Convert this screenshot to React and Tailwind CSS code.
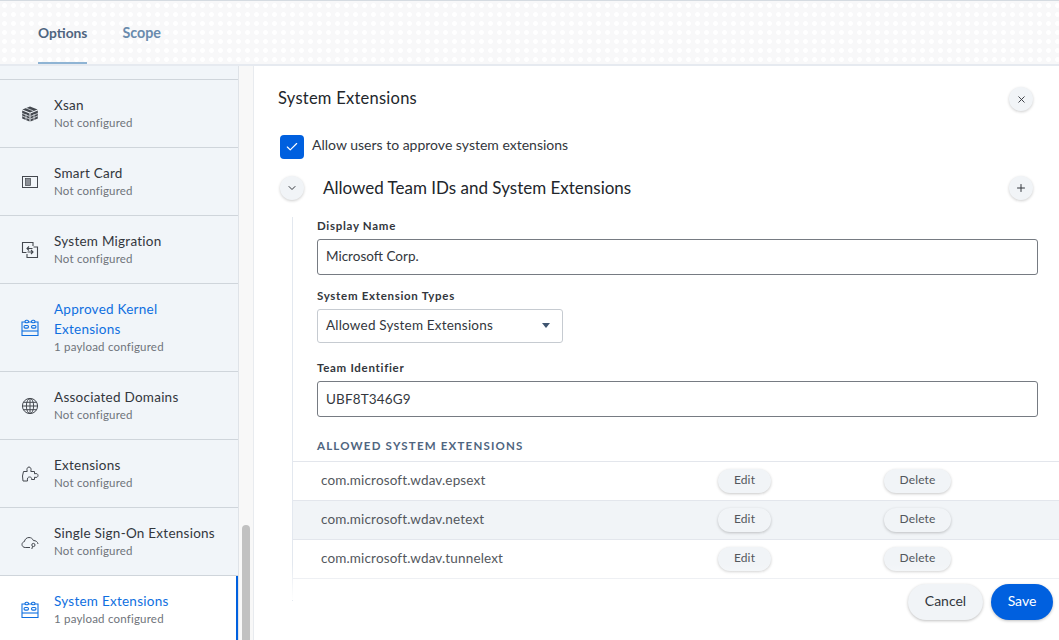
import React from 'react'
import { Check, ChevronDown, X, Plus } from 'lucide-react'

function XsanIcon() {
  return (
    <svg width="18" height="18" viewBox="0 0 18 18" fill="#44484f">
      <path d="M9 1.5 16.6 4.6 9 7.6 1.4 4.6Z" />
      <path d="M1.2 5.6 8.5 8.6V16.6L1.2 13.6Z" />
      <path d="M16.8 5.6 9.5 8.6V16.6L16.8 13.6Z" />
      <path d="M1.2 8.4 8.5 11.4M1.2 11 8.5 14M16.8 8.4 9.5 11.4M16.8 11 9.5 14M5 3 12.5 6M5 9 5 15M13 9 13 15" stroke="#f1f5f9" strokeWidth="0.7" fill="none" />
    </svg>
  )
}

function CardIcon() {
  return (
    <svg width="18" height="18" viewBox="0 0 18 18" fill="none" stroke="#44484f">
      <rect x="1.5" y="3.5" width="15" height="11" strokeWidth="1" />
      <rect x="4.5" y="5.5" width="5" height="7" fill="#8b8f96" strokeWidth="0.7" />
    </svg>
  )
}

function MigrationIcon() {
  return (
    <svg width="18" height="18" viewBox="0 0 18 18" fill="none" stroke="#44484f" strokeWidth="1.1">
      <path d="M5.5 11.5H1.5V1.5H12V5" />
      <path d="M12.5 6H16.5V16.5H6V13" />
      <path d="M11.5 7.5H6M8 5.5 6 7.5 8 9.5" />
      <path d="M6.5 11H12M10 9 12 11 10 13" />
    </svg>
  )
}

function KernelIcon() {
  return (
    <svg width="18" height="18" viewBox="0 0 18 18" fill="none" stroke="#0f6fe0" strokeWidth="1.1">
      <path d="M1 3H17V16.5H1Z" />
      <path d="M1 12H17" />
      <rect x="3" y="6.5" width="4.5" height="2.6" rx="1.3" />
      <rect x="10.5" y="6.5" width="4.5" height="2.6" rx="1.3" />
      <rect x="4" y="1.2" width="3.5" height="2.6" rx="1.3" fill="#f1f5f9" />
      <rect x="10.5" y="1.2" width="3.5" height="2.6" rx="1.3" fill="#f1f5f9" />
    </svg>
  )
}

function GlobeIcon() {
  return (
    <svg width="18" height="18" viewBox="0 0 18 18" fill="none" stroke="#44484f" strokeWidth="1">
      <circle cx="9" cy="9" r="7.6" />
      <ellipse cx="9" cy="9" rx="3.6" ry="7.6" />
      <path d="M9 1.4V16.6M1.4 9H16.6M2.5 5.3H15.5M2.5 12.7H15.5" />
    </svg>
  )
}

function PuzzleIcon() {
  return (
    <svg width="18" height="18" viewBox="0 0 18 18" fill="none" stroke="#44484f" strokeWidth="1">
      <path d="M2 16 1.5 11 2.5 6.5H6.2C5.4 3.5 6.5 2 8 2 9.5 2 10.6 3.5 9.8 6.5H13.5V8.8C16 8 17 9.2 17 10.5 17 11.8 16 13 13.5 12.2V14.5H10.5C11 12.8 10 12 8.5 12 7 12 6 13 6.5 16Z" />
    </svg>
  )
}

function CloudIcon() {
  return (
    <svg width="18" height="18" viewBox="0 0 18 18" fill="none" stroke="#44484f" strokeWidth="1">
      <path d="M9 14.5H4.2C2.4 14.5 1 13.2 1 11.5 1 10 2 8.9 3.4 8.6 3.8 6.2 5.7 4.5 8 4.5 10 4.5 11.7 5.7 12.4 7.5 14.8 7.5 16.8 8.9 17 11" />
      <circle cx="12.4" cy="12" r="1.6" />
      <path d="M11.6 13.4 10.8 16" />
    </svg>
  )
}

const items = [
  { name: 'Xsan', sub: 'Not configured', icon: <XsanIcon /> },
  { name: 'Smart Card', sub: 'Not configured', icon: <CardIcon /> },
  { name: 'System Migration', sub: 'Not configured', icon: <MigrationIcon /> },
  { name: 'Approved Kernel Extensions', sub: '1 payload configured', icon: <KernelIcon />, blue: true, tall: true },
  { name: 'Associated Domains', sub: 'Not configured', icon: <GlobeIcon /> },
  { name: 'Extensions', sub: 'Not configured', icon: <PuzzleIcon /> },
  { name: 'Single Sign-On Extensions', sub: 'Not configured', icon: <CloudIcon /> },
  { name: 'System Extensions', sub: '1 payload configured', icon: <KernelIcon />, blue: true, active: true },
]

const rows = [
  { name: 'com.microsoft.wdav.epsext' },
  { name: 'com.microsoft.wdav.netext', shaded: true },
  { name: 'com.microsoft.wdav.tunnelext' },
]

function SideItem({ item }) {
  return (
    <div
      className={`flex items-center shrink-0 pl-[21px] border-b border-[#cfd5db] ${item.tall ? 'h-[88px]' : 'h-[68px]'} ${item.active ? 'bg-white border-r-2 border-r-[#0060df]' : ''}`}
    >
      <div className="w-[33px] shrink-0 flex">{item.icon}</div>
      <div className="min-w-0 w-[170px] pb-px">
        <div className={`text-[13.5px] leading-[20px] tracking-[0.25px] ${item.tall ? 'w-[125px]' : ''} ${item.blue ? 'text-[#0f6fe0]' : 'text-[#33373d]'}`}>{item.name}</div>
        <div className="text-[11.5px] leading-[16px] tracking-[0.2px] text-[#6f747b]">{item.sub}</div>
      </div>
    </div>
  )
}

function RoundButton({ children }) {
  return (
    <button className="w-6 h-6 rounded-full bg-[#f1f4f7] shadow-[0_1px_3px_rgba(0,0,0,0.2)] flex items-center justify-center text-[#33373d]">
      {children}
    </button>
  )
}

function Pill({ children, className }) {
  return (
    <button className={`h-6 pb-[2px] rounded-full bg-[#f1f4f7] shadow-[0_1px_3px_rgba(0,0,0,0.22)] text-[12px] text-[#53575d] ${className}`}>
      {children}
    </button>
  )
}

export default function App() {
  return (
    <div className="w-[1059px] h-[640px] overflow-hidden flex flex-col bg-white font-['Lato','Liberation_Sans',sans-serif]">
      <header className="h-[66px] shrink-0 border-t border-[#d5dbe1] border-b-2 border-b-[#e6eaf0] bg-[#f8f8f9] bg-[radial-gradient(#ffffff_2px,transparent_3px)] bg-[length:9px_9px] flex pl-[38px] gap-[35px] z-10">
        <div className="h-full flex items-center pt-[3px] border-b-2 border-[#8fb4d4] mb-[-2px] text-[13.8px] font-bold text-[#4f6580]">Options</div>
        <div className="h-full flex items-center text-[14.3px] font-bold text-[#6a8bad]">Scope</div>
      </header>

      <div className="flex flex-1 min-h-0">
        <aside className="w-[254px] shrink-0 flex border-r border-[#e8ebef]">
          <div className="w-[239px] shrink-0 bg-[#f1f5f9] border-r border-[#dfe3e8] flex flex-col overflow-hidden">
            <div className="h-[14px] shrink-0 border-b border-[#cfd5db]" />
            {items.map((item) => (
              <SideItem key={item.name} item={item} />
            ))}
          </div>
          <div className="flex-1 bg-[#f8f8f8] flex flex-col justify-end items-center">
            <div className="w-[8px] h-[115px] rounded-t-full bg-[#c1c1c1]" />
          </div>
        </aside>

        <main className="flex-1 min-w-0 pl-[24px] relative">
          <div className="flex items-center justify-between h-[66px] pr-[26px]">
            <h1 className="text-[16.5px] tracking-[0.25px] pb-[2px] text-[#22262b]">System Extensions</h1>
            <RoundButton><X size={11} strokeWidth={2} /></RoundButton>
          </div>

          <div className="flex items-start h-[24px] mt-px pl-[2px]">
            <span className="w-6 h-6 mt-[2px] rounded bg-[#0060df] flex items-center justify-center">
              <Check size={14} color="white" strokeWidth={2} />
            </span>
            <span className="ml-2 text-[14px] leading-[24px] text-[#33373d]">Allow users to approve system extensions</span>
          </div>

          <div className="flex items-center justify-between h-[24px] mt-[19px] pl-[2px] pr-[26px]">
            <div className="flex items-center">
              <RoundButton><ChevronDown size={12} strokeWidth={2} /></RoundButton>
              <span className="ml-[19px] pb-px text-[17px] text-[#22262b]">Allowed Team IDs and System Extensions</span>
            </div>
            <RoundButton><Plus size={12} strokeWidth={2} /></RoundButton>
          </div>

          <section className="mt-[17px] ml-[14px] pb-[22px] border-l border-[#e3e8ef]">
            <div className="pl-[24px] pr-[21px]">
              <label className="block text-[11.5px] leading-[16px] font-bold tracking-[0.7px] text-[#33373d] pt-[1px]">Display Name</label>
              <div className="mt-[5px] h-[36px] pb-px border border-[#767b82] rounded-[3px] flex items-center pl-2 text-[13.5px] text-[#33373d]">Microsoft Corp.</div>

              <label className="block mt-[13px] text-[11.5px] leading-[16px] font-bold tracking-[0.7px] text-[#33373d]">System Extension Types</label>
              <div className="mt-[5px] w-[246px] h-[34px] border border-[#c6cbd1] rounded-[3px] flex items-center justify-between pl-2 pr-3 pb-px text-[13.5px] tracking-[0.2px] text-[#33373d]">
                Allowed System Extensions
                <span className="w-0 h-0 border-x-[4px] border-x-transparent border-t-[5px] border-t-[#3f5570]" />
              </div>

              <label className="block mt-[17px] text-[11.5px] leading-[16px] font-bold tracking-[0.7px] text-[#33373d]">Team Identifier</label>
              <div className="mt-[5px] h-[36px] border border-[#767b82] rounded-[3px] flex items-center pl-2 text-[13.5px] tracking-[0.15px] text-[#33373d]">UBF8T346G9</div>

              <div className="mt-[21px] text-[11.5px] leading-[16px] font-bold tracking-[1.2px] text-[#4f6580]">ALLOWED SYSTEM EXTENSIONS</div>
            </div>

            <div className="mt-[7px] border-t border-[#e3e6ec]">
              {rows.map((row) => (
                <div key={row.name} className={`h-[39px] flex items-center border-b border-[#e3e6ec] pl-[28px] text-[13.5px] tracking-[0.15px] text-[#53575d] ${row.shaded ? 'bg-[#f1f4f7]' : ''}`}>
                  <span className="w-[396px] shrink-0 pb-[2px]">{row.name}</span>
                  <Pill className="ml-px w-[53px]">Edit</Pill>
                  <Pill className="ml-[113px] w-[67px]">Delete</Pill>
                </div>
              ))}
            </div>
          </section>

          {/* content fades out above the footer buttons */}
          <div className="absolute left-0 right-0 bottom-[40px] h-[36px] bg-gradient-to-b from-transparent to-white pointer-events-none" />

          <div className="absolute right-[6px] bottom-[20px] flex gap-2">
            <button className="w-[75px] h-9 pb-[3px] rounded-full bg-[#f1f4f7] shadow-[0_1px_3px_rgba(0,0,0,0.25)] text-[14px] text-[#33373d]">Cancel</button>
            <button className="w-[62px] h-9 pb-[3px] rounded-full bg-[#0060df] shadow-[0_1px_3px_rgba(0,0,0,0.25)] text-[14px] text-white">Save</button>
          </div>
        </main>
      </div>
    </div>
  )
}
